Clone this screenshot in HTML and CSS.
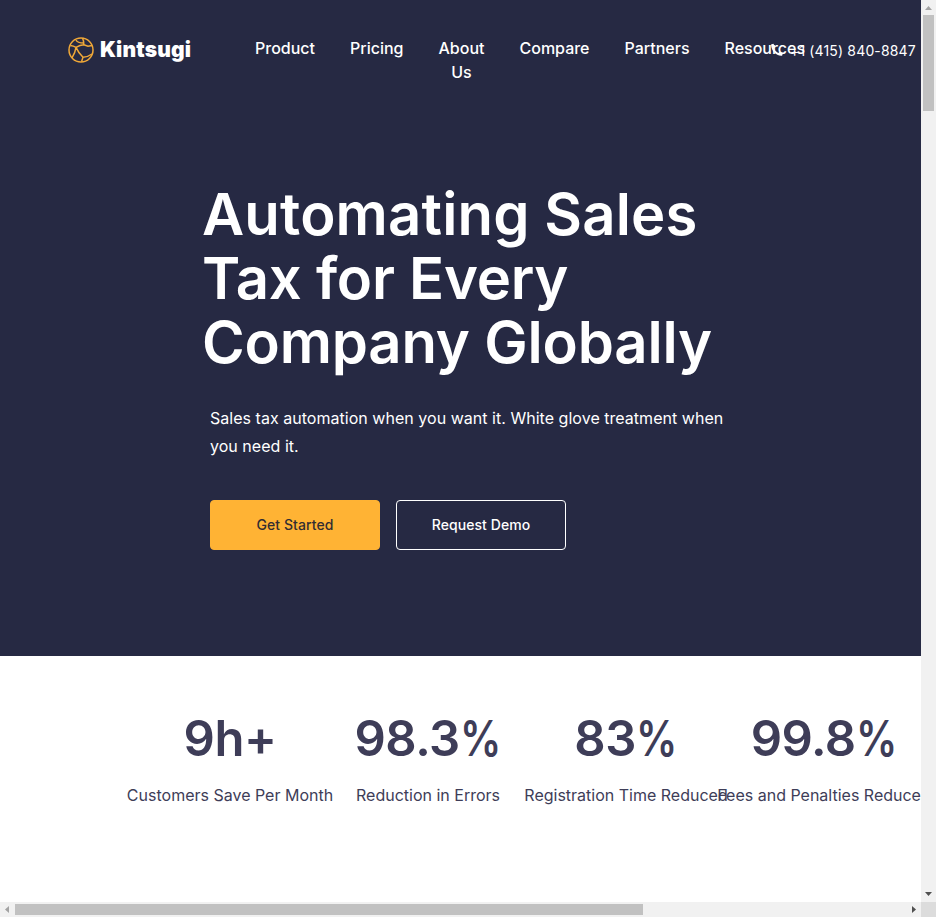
FILE: index.html
```html
<!DOCTYPE html>
<html lang="en">
<head>
<meta charset="utf-8">
<title>Kintsugi</title>
<link rel="stylesheet" href="styles.css">
</head>
<body>
<div class="viewport">
  <main class="page">
    <section class="hero">
      <header class="header">
        <a class="logo">
          <svg class="logo-mark" viewBox="0 0 26 26" fill="none" stroke="#f0a838" stroke-width="1.5">
            <circle cx="13" cy="13" r="12"/>
            <path d="M14.5 1.2Q16 4 15.8 7.8Q12 8 8 10.4Q5.500 8.800 2.300 8.500M8 3Q9.500 6 15.500 6M15.800 7.800 20 9.300 24.200 8.500M8 10.400Q7.200 16 4 20.800M8 10.400Q10.500 16 15 20.300Q20 20 24 17M15 20.300 13.500 24.800"/>
          </svg>
          <span class="logo-name">Kintsugi</span>
        </a>
        <nav class="nav">
          <a>Product</a><a>Pricing</a><a>About<br>Us</a><a>Compare</a><a>Partners</a><a>Resources</a>
        </nav>
        <a class="phone">
          <svg class="phone-icon" viewBox="0 0 14 14" fill="#fff"><path d="M1.500 1.200 3.500.8 4.800 3.800 3.800 5.200Q5.100 8.200 8.200 9.900L9.600 8.900 12.800 10.300 12.300 12.300Q12 12.900 11.200 12.800C5.800 12 1.600 8 1.100 2.200Q1.100 1.400 1.500 1.200Z"/></svg>
          <span>+1 (415) 840-8847</span>
        </a>
      </header>
      <div class="intro">
        <h1 class="title"><span class="wide">Automating Sales</span><br><span class="narrow">Tax for Every</span><br>Company Globally</h1>
        <p class="lead">Sales tax automation when you want it. White glove treatment when<br>you need it.</p>
        <div class="actions">
          <a class="button button-primary">Get Started</a>
          <a class="button button-outline">Request Demo</a>
        </div>
      </div>
    </section>
    <section class="stats">
      <div class="stat"><strong>9h+</strong><span>Customers Save Per Month</span></div>
      <div class="stat"><strong>98.3<i>%</i></strong><span>Reduction in Errors</span></div>
      <div class="stat"><strong>83<i>%</i></strong><span>Registration Time Reduced</span></div>
      <div class="stat"><strong>99.8<i>%</i></strong><span>Fees and Penalties Reduced</span></div>
    </section>
  </main>
  <div class="scroll scroll-y">
    <svg viewBox="0 0 15 15" fill="#a3a3a3"><path d="M4 10h7L7.5 6z"/></svg>
    <div class="thumb"></div>
    <svg class="end" viewBox="0 0 15 15" fill="#505050"><path d="M4 5h7L7.5 9z"/></svg>
  </div>
  <div class="scroll scroll-x">
    <svg viewBox="0 0 15 15" fill="#a3a3a3"><path d="M9 4v7L5 7.5z"/></svg>
    <div class="thumb"></div>
    <svg class="end" viewBox="0 0 15 15" fill="#505050"><path d="M6 4v7l4-3.5z"/></svg>
  </div>
  <div class="corner"></div>
</div>
</body>
</html>
```

FILE: styles.css
```css
* { box-sizing: border-box; }
body { margin: 0; overflow: hidden; font-family: Inter, "Liberation Sans", sans-serif; }
.viewport {
  display: grid;
  grid-template: 902px 15px / 921px 15px;
  width: 936px;
  height: 917px;
}
.page { min-width: 0; overflow: hidden; background: #fff; }
.hero { height: 656px; background: #262943; color: #fff; }
.header { display: flex; align-items: flex-start; height: 182px; padding-top: 36px; }
.logo { display: flex; align-items: center; gap: 6px; width: 187px; height: 26px; margin: 1px 0 0 68px; }
.logo-mark { width: 26px; height: 26px; flex: none; }
.logo-name { font-size: 21px; font-weight: 900; line-height: 26px; letter-spacing: .15px; }
.nav { display: flex; gap: 35px; width: 515px; flex: none; font-size: 16px; font-weight: 500; line-height: 24px; text-align: center; }
.nav a { flex: none; white-space: nowrap; }
.phone { display: flex; align-items: center; gap: 6px; height: 24px; margin-top: 2px; font-size: 14px; letter-spacing: .15px; white-space: nowrap; }
.phone-icon { width: 14px; height: 14px; }
.intro { padding-left: 210px; }
.title { margin: 0 0 0 -8px; font-size: 58px; font-weight: 600; line-height: 64px; letter-spacing: -.17px; white-space: nowrap; }
.title .wide { letter-spacing: .17px; }
.title .narrow { letter-spacing: -.25px; }
.lead { margin: 30px 0 0; font-size: 16px; line-height: 28px; letter-spacing: .03px; white-space: nowrap; }
.actions { display: flex; gap: 16px; margin-top: 40px; }
.button { display: grid; place-items: center; width: 170px; height: 50px; padding-bottom: 2px; border: 1px solid #fff; border-radius: 4px; font-size: 14px; font-weight: 500; letter-spacing: .08px; }
.button-primary { border-color: #ffb334; background: #ffb334; color: #322d32; }
.stats { display: grid; grid-template-columns: repeat(4, 198px); width: 792px; margin: 50px 0 0 131px; color: #3e3d58; }
.stat { display: flex; flex-direction: column; align-items: center; white-space: nowrap; }
.stat strong { font-size: 49px; font-weight: 600; line-height: 66px; letter-spacing: -.5px; }
.stat i { display: inline-block; margin-right: -7px; font-style: normal; transform: scaleX(.84); transform-origin: left; }
.stat span { margin-top: 11px; font-size: 16px; line-height: 24px; }
.scroll { display: flex; background: #f1f1f1; }
.scroll svg { width: 15px; height: 15px; flex: none; }
.scroll .end { margin-left: auto; }
.scroll-y { flex-direction: column; }
.scroll-y .end { margin: auto 0 0; }
.thumb { background: #c1c1c1; }
.scroll-y .thumb { width: 11px; height: 96px; margin-left: 2px; }
.scroll-x { grid-row: 2; grid-column: 1; }
.scroll-x .thumb { width: 628px; height: 11px; margin-top: 2px; }
.corner { grid-row: 2; grid-column: 2; background: #dcdcdc; }
```
